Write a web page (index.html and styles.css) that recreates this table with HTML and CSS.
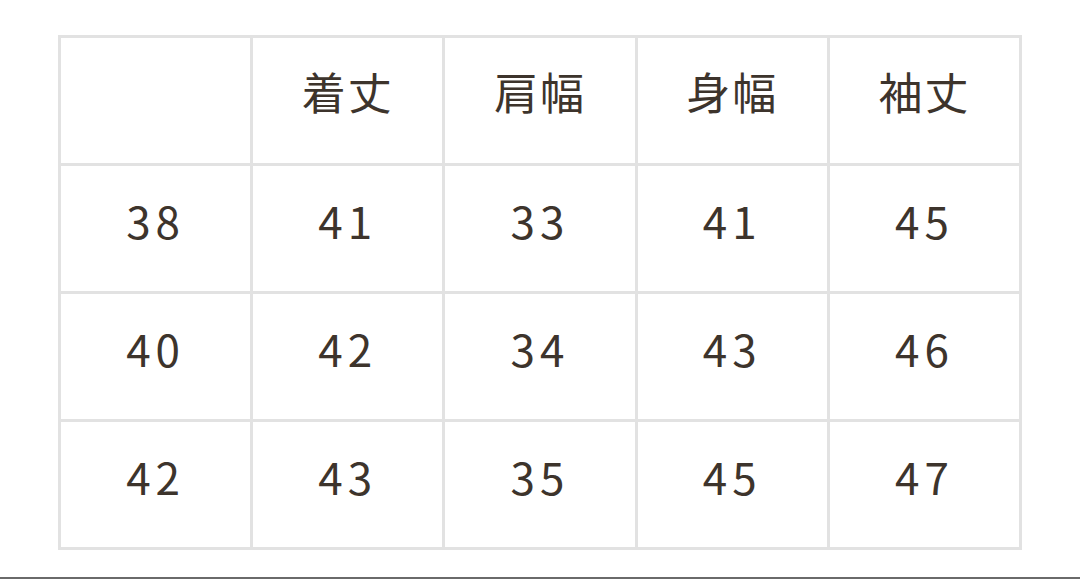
FILE: index.html
```html
<!DOCTYPE html>
<html lang="ja">
<head>
<meta charset="utf-8">
<link rel="stylesheet" href="styles.css">
</head>
<body>
<div class="page">
  <div class="sheet">
    <div class="size-table">
      <div class="cell"></div>
      <div class="cell">着丈</div>
      <div class="cell">肩幅</div>
      <div class="cell">身幅</div>
      <div class="cell">袖丈</div>

      <div class="cell num">38</div>
      <div class="cell num">41</div>
      <div class="cell num">33</div>
      <div class="cell num">41</div>
      <div class="cell num">45</div>

      <div class="cell num">40</div>
      <div class="cell num">42</div>
      <div class="cell num">34</div>
      <div class="cell num">43</div>
      <div class="cell num">46</div>

      <div class="cell num">42</div>
      <div class="cell num">43</div>
      <div class="cell num">35</div>
      <div class="cell num">45</div>
      <div class="cell num">47</div>
    </div>
  </div>
  <div class="rule"></div>
</div>
</body>
</html>
```
FILE: styles.css
```css
html, body {
  margin: 0;
  padding: 0;
  background: #ffffff;
}
.page {
  width: 1080px;
  height: 579px;
  display: flex;
  flex-direction: column;
  overflow: hidden;
}
.sheet {
  flex: 1;
  padding: 35px 0 0 58px;
}
.size-table {
  width: 964px;
  height: 515px;
  box-sizing: border-box;
  display: grid;
  grid-template-columns: repeat(5, 1fr);
  grid-template-rows: repeat(4, 1fr);
  gap: 3px;
  padding: 3px;
  background: #e2e2e2;
}
.cell {
  background: #ffffff;
  display: flex;
  align-items: center;
  justify-content: center;
  font-family: "Noto Sans CJK JP", "Noto Sans", sans-serif;
  font-size: 44px;
  color: #3d342c;
  letter-spacing: 2px;
  padding-bottom: 20px;
  box-sizing: border-box;
}
.cell.num {
  letter-spacing: 5px;
  padding-bottom: 18px;
}
.rule {
  height: 2px;
  background: #6a6a6a;
}
```
